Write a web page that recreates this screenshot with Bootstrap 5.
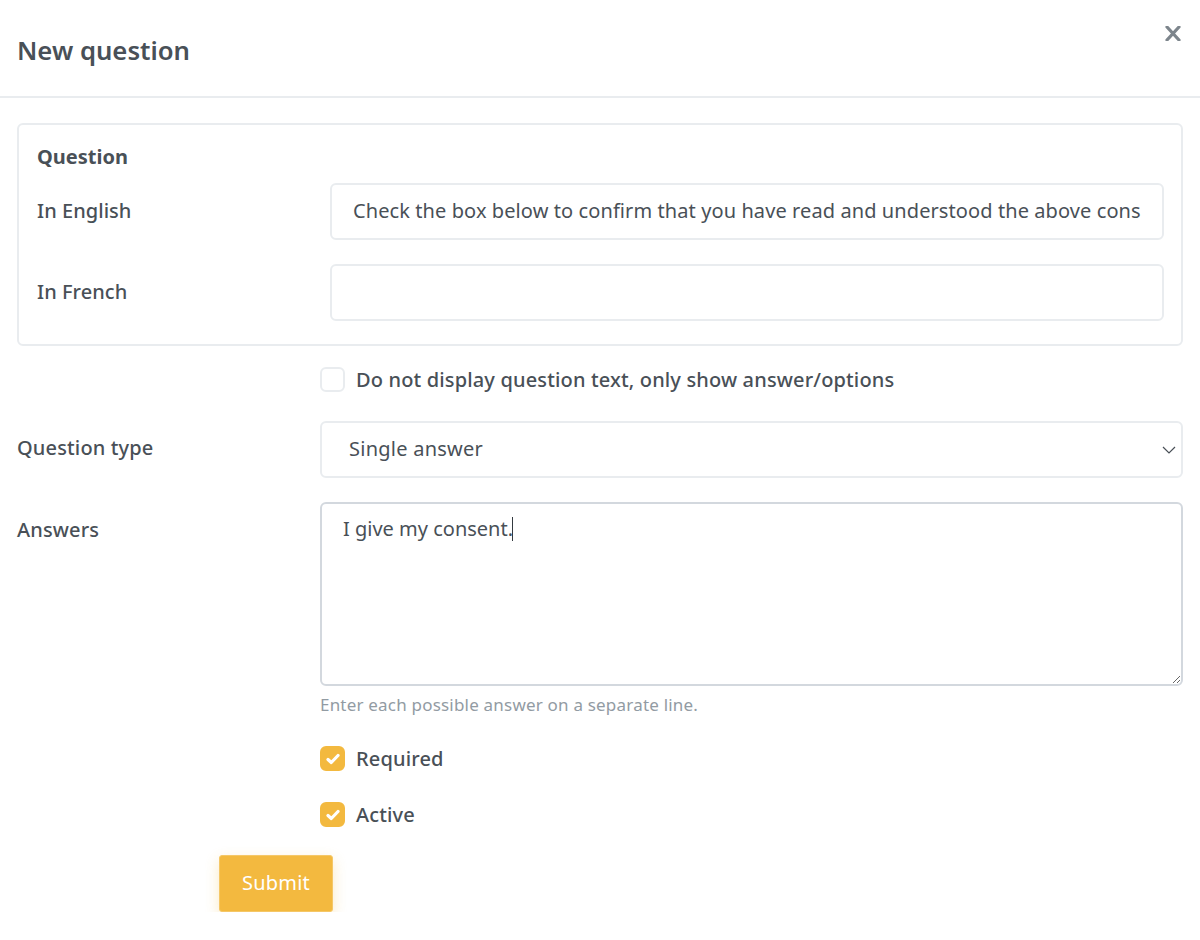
<!DOCTYPE html>
<html lang="en">
<head>
    <meta charset="UTF-8">
    <meta name="viewport" content="width=device-width, initial-scale=1.0">
    <title>New question</title>
    <link href="https://cdn.jsdelivr.net/npm/bootstrap@5.3.0/dist/css/bootstrap.min.css" rel="stylesheet">
    <style>
        body { background: #fff; color: #495057; font-family: "Noto Sans", "Open Sans", sans-serif; font-size: 20px; letter-spacing: .15px; overflow: hidden; }
        .q-header { height: 98px; padding: 0 17px; border-bottom: 2px solid #e9ecef; position: relative; }
        .q-title { font-size: 25.7px; font-weight: 600; letter-spacing: 0; margin: 0; line-height: 1; padding-top: 38px; color: #495057; }
        .q-close { position: absolute; top: 26px; right: 18px; width: 18px; height: 15px; border: 0; background: none; padding: 0; line-height: 0; }
        .q-body { padding: 25px 17px 0; }
        .q-box { border: 2px solid #e9ecef; border-radius: 6px; height: 223px; padding: 20px 17px 0 18px; margin-bottom: 21px; }
        .q-legend { font-weight: 700; letter-spacing: 0; line-height: 24px; height: 38px; }
        .q-label { width: 303px; flex-shrink: 0; line-height: 24px; font-weight: 500; }
        .q-box .q-label { width: 293px; padding-bottom: 2px; letter-spacing: .05px; }
        .q-label-up { padding-bottom: 3px; }
        .q-row { margin-bottom: 24px; }
        .q-row-gap { margin-bottom: 29px; }
        .q-box .q-row { margin-bottom: 24px; }
        .q-input { height: 57px; border: 2px solid #e9ecef; border-radius: 6px; font-size: 20px; letter-spacing: .09px; color: #495057; padding: 0 21px 2px; box-shadow: none; }
        .q-select { height: 57px; border: 2px solid #e9ecef; border-radius: 6px; font-size: 20px; letter-spacing: .25px; color: #495057; padding: 0 27px 2px;
            background-image: url("data:image/svg+xml,%3csvg xmlns='http://www.w3.org/2000/svg' viewBox='0 0 14 8'%3e%3cpath fill='none' stroke='%23495057' stroke-width='1.2' d='M1 1l6 6 6-6'/%3e%3c/svg%3e");
            background-position: right 5px center; background-size: 14px 8px; }
        .q-wrap { position: relative; flex-grow: 1; }
        .q-area { height: 184px; border: 2px solid #d3d8de; border-radius: 6px; font-size: 20px; color: #495057; padding: 10px 21px; line-height: 30px; letter-spacing: 0; box-shadow: none; }
        .q-caret { position: absolute; left: 192px; top: 15px; width: 1px; height: 24px; background: #343a40; }
        .q-hint { font-size: 17px; letter-spacing: .2px; color: #929ba3; line-height: 22px; margin: 8px 0 30px; }
        .q-check { display: flex; align-items: center; gap: 11px; height: 25px; margin: 0; line-height: 25px; font-weight: 500; }
        .q-check-gap { margin-bottom: 31px; }
        .q-check .form-check-input { width: 25px; height: 25px; margin: 0; border: 2px solid #e9ecef; border-radius: 6px; flex-shrink: 0; float: none; }
        .q-check .form-check-input:checked { background-color: #f3b93f; border-color: #f3b93f;
            background-image: url("data:image/svg+xml,%3csvg xmlns='http://www.w3.org/2000/svg' viewBox='0 0 14 12'%3e%3cpath fill='none' stroke='%23fff' stroke-width='3.2' stroke-linecap='round' stroke-linejoin='round' d='M2 6.5l3.3 3L12 2.5'/%3e%3c/svg%3e");
            background-size: 14px 12px; }
        .q-offset { margin-left: 303px; }
        .q-submit { display: block; width: 114px; height: 57px; margin: 28px 0 0 202px; background: #f3b93f; border: 1px solid #f5c767; border-radius: 3px; color: #fff; font-size: 20px; letter-spacing: .2px; padding: 0 0 2px; box-shadow: 0 5px 14px rgba(243, 185, 63, .3); }
    </style>
</head>
<body>
    <div class="q-header">
        <h5 class="q-title">New question</h5>
        <button type="button" class="q-close" aria-label="Close">
            <svg width="18" height="15" viewBox="0 0 18 15"><path d="M3 1 L15 14 M15 1 L3 14" stroke="#7d858c" stroke-width="3.2" stroke-linecap="round" fill="none"/></svg>
        </button>
    </div>

    <form class="q-body">
        <div class="q-box">
            <div class="q-legend">Question</div>
            <div class="d-flex align-items-center q-row">
                <label class="q-label">In English</label>
                <input type="text" class="form-control q-input" value="Check the box below to confirm that you have read and understood the above consent">
            </div>
            <div class="d-flex align-items-center q-row">
                <label class="q-label">In French</label>
                <input type="text" class="form-control q-input">
            </div>
        </div>

        <div class="q-offset q-row-gap">
            <label class="q-check"><input type="checkbox" class="form-check-input"> Do not display question text, only show answer/options</label>
        </div>

        <div class="d-flex align-items-center q-row">
            <label class="q-label q-label-up">Question type</label>
            <select class="form-select q-select"><option>Single answer</option></select>
        </div>

        <div class="d-flex">
            <label class="q-label pt-3">Answers</label>
            <div class="q-wrap">
                <textarea class="form-control q-area">I give my consent.</textarea>
                <span class="q-caret"></span>
            </div>
        </div>

        <div class="q-offset">
            <div class="q-hint">Enter each possible answer on a separate line.</div>
            <label class="q-check q-check-gap"><input type="checkbox" class="form-check-input" checked> Required</label>
            <label class="q-check"><input type="checkbox" class="form-check-input" checked> Active</label>
        </div>

        <button type="button" class="btn q-submit">Submit</button>
    </form>

    <script src="https://cdn.jsdelivr.net/npm/bootstrap@5.3.0/dist/js/bootstrap.bundle.min.js"></script>
</body>
</html>
